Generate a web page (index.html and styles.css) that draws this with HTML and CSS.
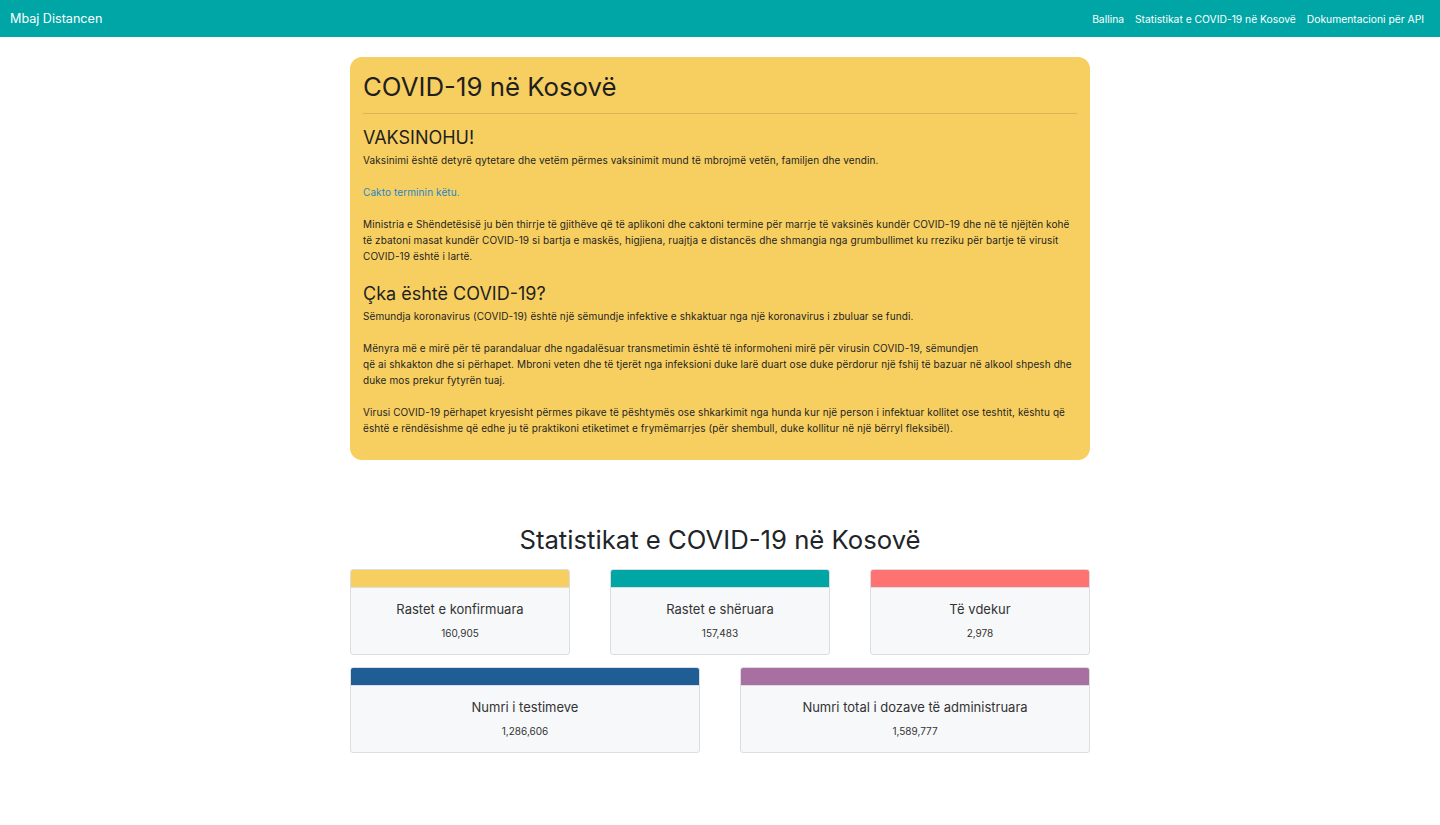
FILE: index.html
```html
<!DOCTYPE html>
<html lang="sq">
<head>
<meta charset="utf-8">
<title>Mbaj Distancen</title>
<link rel="stylesheet" href="styles.css">
</head>
<body>
<nav class="navbar">
  <a class="brand" href="#">Mbaj Distancen</a>
  <ul class="nav-links">
    <li><a href="#">Ballina</a></li>
    <li><a href="#">Statistikat e COVID-19 në Kosovë</a></li>
    <li><a href="#">Dokumentacioni për API</a></li>
  </ul>
</nav>
<main class="container">
  <section class="jumbotron">
    <h1 class="title">COVID-19 në Kosovë</h1>
    <hr class="divider">
    <h2 class="subtitle">VAKSINOHU!</h2>
    <p class="text">Vaksinimi është detyrë qytetare dhe vetëm përmes vaksinimit mund të mbrojmë vetën, familjen dhe vendin.<br><br><a class="link" href="#">Cakto terminin këtu.</a><br><br>Ministria e Shëndetësisë ju bën thirrje të gjithëve që të aplikoni dhe caktoni termine për marrje të vaksinës kundër COVID-19 dhe në të njëjtën kohë të zbatoni masat kundër COVID-19 si bartja e maskës, higjiena, ruajtja e distancës dhe shmangia nga grumbullimet ku rreziku për bartje të virusit COVID-19 është i lartë.</p>
    <h2 class="subtitle">Çka është COVID-19?</h2>
    <p class="text">Sëmundja koronavirus (COVID-19) është një sëmundje infektive e shkaktuar nga një koronavirus i zbuluar se fundi.<br><br>Mënyra më e mirë për të parandaluar dhe ngadalësuar transmetimin është të informoheni mirë për virusin COVID-19, sëmundjen<br>që ai shkakton dhe si përhapet. Mbroni veten dhe të tjerët nga infeksioni duke larë duart ose duke përdorur një fshij të bazuar në alkool shpesh dhe duke mos prekur fytyrën tuaj.<br><br>Virusi COVID-19 përhapet kryesisht përmes pikave të pështymës ose shkarkimit nga hunda kur një person i infektuar kollitet ose teshtit, kështu që është e rëndësishme që edhe ju të praktikoni etiketimet e frymëmarrjes (për shembull, duke kollitur në një bërryl fleksibël).</p>
  </section>

  <section class="stats">
    <h2 class="stats-title">Statistikat e COVID-19 në Kosovë</h2>
    <div class="row row-3">
      <div class="card"><div class="card-head yellow"></div><div class="card-body"><h3 class="card-title">Rastet e konfirmuara</h3><p class="card-value">160,905</p></div></div>
      <div class="card"><div class="card-head teal"></div><div class="card-body"><h3 class="card-title">Rastet e shëruara</h3><p class="card-value">157,483</p></div></div>
      <div class="card"><div class="card-head red"></div><div class="card-body"><h3 class="card-title">Të vdekur</h3><p class="card-value">2,978</p></div></div>
    </div>
    <div class="row row-2">
      <div class="card"><div class="card-head blue"></div><div class="card-body"><h3 class="card-title">Numri i testimeve</h3><p class="card-value">1,286,606</p></div></div>
      <div class="card"><div class="card-head purple"></div><div class="card-body"><h3 class="card-title">Numri total i dozave të administruara</h3><p class="card-value">1,589,777</p></div></div>
    </div>
  </section>
</main>
</body>
</html>
```

FILE: styles.css
```css
* { box-sizing: border-box; }
body {
  margin: 0;
  font-family: Inter, "Noto Sans", "Liberation Sans", sans-serif;
  color: #212529;
  background: #fff;
}
.navbar {
  height: 37px;
  background: #00a6a6;
  display: flex;
  align-items: center;
  justify-content: space-between;
  padding: 0 16px 0 10px;
}
.brand {
  color: #fff;
  text-decoration: none;
  font-size: 12.6px;
}
.nav-links {
  list-style: none;
  margin: 0;
  padding: 0;
  display: flex;
  gap: 11px;
  font-size: 10.3px;
}
.nav-links a { color: #fff; text-decoration: none; }

.container {
  width: 740px;
  margin: 20px auto 0;
}
.jumbotron {
  background: #f7cf61;
  border-radius: 12px;
  padding: 13px 13px 24px;
}
.title {
  margin: 0;
  font-size: 25.8px;
  font-weight: 400;
  line-height: 34px;
  color: #1f1f1f;
}
.divider {
  border: 0;
  border-top: 1px solid rgba(0,0,0,0.12);
  margin: 9px 0 12px;
}
.subtitle {
  margin: 0 0 2px;
  font-size: 18px;
  font-weight: 400;
  line-height: 24px;
  color: #1f1f1f;
}
.text {
  margin: 0 0 18px;
  font-size: 10px;
  letter-spacing: 0.1px;
  line-height: 16px;
  color: #1f1f1f;
}
.text:last-child { margin-bottom: 0; }
.link { color: #1d86c8; text-decoration: none; }

.stats { margin-top: 63px; }
.stats-title {
  margin: 0 0 12px;
  text-align: center;
  font-size: 25.7px;
  font-weight: 400;
  line-height: 34px;
}
.row {
  display: grid;
  gap: 40px;
  margin-bottom: 12px;
}
.row-3 { grid-template-columns: repeat(3, 1fr); }
.row-2 { grid-template-columns: repeat(2, 1fr); }
.card {
  border: 1px solid #dcdde0;
  border-radius: 3px;
  overflow: hidden;
  background: #f7f8fa;
}
.card-head { height: 17px; }
.yellow { background: #f7cf61; }
.teal { background: #00a6a6; }
.red { background: #ff7272; }
.blue { background: #1f5e95; }
.purple { background: #a86fa1; }
.card-body {
  padding: 12px 10px 13px;
  text-align: center;
  border-top: 1px solid #dcdde0;
}
.card-title {
  margin: 0;
  font-size: 13px;
  font-weight: 400;
  line-height: 18px;
  color: #333;
}
.card-value {
  margin: 7px 0 0;
  font-size: 10px;
  line-height: 16px;
  color: #333;
}
```
